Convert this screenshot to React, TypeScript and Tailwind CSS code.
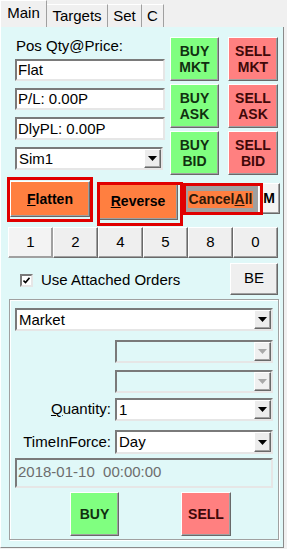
import React from "react";

// 凸起按钮边框
const raised =
  "border border-t-white border-l-white border-r-[#696969] border-b-[#696969] shadow-[inset_-1px_-1px_0_#a0a0a0]";
// 凹陷输入框边框
const sunken =
  "border-2 border-t-[#7a7a7a] border-l-[#7a7a7a] border-r-[#e6e6e6] border-b-[#e6e6e6]";

function Arrow({ disabled = false }: { disabled?: boolean }) {
  return (
    <div
      className={`w-[17px] h-full flex items-center justify-center ${raised} ${
        disabled ? "bg-[#f0f0f0]" : "bg-[#ececec]"
      }`}
    >
      <svg width="9" height="5" viewBox="0 0 9 5">
        <polygon points="0,0 9,0 4.5,5" fill={disabled ? "#a8a8a8" : "#000"} />
      </svg>
    </div>
  );
}

function Select({
  value,
  className,
  disabled = false,
}: {
  value?: string;
  className: string;
  disabled?: boolean;
}) {
  return (
    <div
      className={`${sunken} flex items-stretch ${
        disabled ? "bg-[#e0f8f8]" : "bg-white"
      } ${className}`}
    >
      <div className="flex-1 pl-[2px] leading-[19px] text-[15px] text-black">{value}</div>
      <Arrow disabled={disabled} />
    </div>
  );
}

function TradeBtn({ top, bottom, buy }: { top: string; bottom?: string; buy: boolean }) {
  return (
    <div
      className={`${raised} ${
        buy ? "bg-[#80ff80] text-[#103010]" : "bg-[#ff8080] text-[#400808]"
      } flex flex-col items-center justify-center font-bold text-[14px] leading-[16px]`}
    >
      <span>{top}</span>
      {bottom && <span>{bottom}</span>}
    </div>
  );
}

export default function App() {
  const nums = ["1", "2", "4", "5", "8", "0"];

  return (
    <div className="relative w-[287px] h-[549px] bg-[#f0f0f0] overflow-hidden font-['Liberation_Sans',Arial,sans-serif] text-black">
      {/* 标签页 */}
      <div className="flex items-end h-[27px]">
        <div className="w-[47px] h-[27px] border-t border-l border-r border-t-white border-l-white border-r-[#a0a0a0] bg-[#f0f0f0] flex items-center justify-center text-[15px] pb-[1px]">
          Main
        </div>
        <div className="w-[61px] h-[23px] border-t border-r border-t-white border-r-[#a0a0a0] flex items-center justify-center text-[15px]">
          Targets
        </div>
        <div className="w-[34px] h-[23px] border-t border-r border-t-white border-r-[#a0a0a0] flex items-center justify-center text-[15px]">
          Set
        </div>
        <div className="w-[22px] h-[23px] border-t border-r border-t-white border-r-[#a0a0a0] flex items-center justify-center text-[15px]">
          C
        </div>
      </div>

      {/* 主面板 */}
      <div className="w-[284px] h-[521px] bg-[#e0f8f8] border-r border-b border-r-[#8a8a8a] border-b-[#8a8a8a] border-l border-l-white">
        {/* 仓位与下单按钮 */}
        <div className="flex pt-[10px]">
          <div className="ml-[14px] w-[150px] flex flex-col">
            <div className="h-[18px] leading-[18px] text-[15px] pl-[1px]">Pos Qty@Price:</div>
            <div className={`${sunken} mt-[4px] h-[22px] bg-white text-[15px] leading-[18px] pl-[1px]`}>Flat</div>
            <div className={`${sunken} mt-[7px] h-[22px] bg-white text-[15px] leading-[18px] pl-[1px]`}>P/L: 0.00P</div>
            <div className={`${sunken} mt-[7px] h-[23px] bg-white text-[15px] leading-[19px] pl-[1px]`}>DlyPL: 0.00P</div>
            <Select value="Sim1" className="mt-[7px] h-[23px] w-[148px]" />
          </div>
          <div className="ml-[5px] grid grid-cols-[49px_50px] grid-rows-[44px_44px_44px] gap-x-[9px] gap-y-[3px]">
            <TradeBtn top="BUY" bottom="MKT" buy />
            <TradeBtn top="SELL" bottom="MKT" buy={false} />
            <TradeBtn top="BUY" bottom="ASK" buy />
            <TradeBtn top="SELL" bottom="ASK" buy={false} />
            <TradeBtn top="BUY" bottom="BID" buy />
            <TradeBtn top="SELL" bottom="BID" buy={false} />
          </div>
        </div>

        {/* Flatten / Reverse / CancelAll */}
        <div className="flex items-start mt-[6px] h-[46px]">
          <div className={`${raised} ml-[9px] w-[80px] h-[36px] bg-[#ff7f40] flex items-center justify-center font-bold text-[14px]`}>
            <span><span className="underline">F</span>latten</span>
          </div>
          <div className={`${raised} ml-[8px] mt-[2px] w-[80px] h-[37px] bg-[#ff7f40] flex items-center justify-center font-bold text-[14px]`}>
            <span><span className="underline">R</span>everse</span>
          </div>
          <div className="ml-[5px] mt-[3px] w-[75px] h-[30px] bg-[#a0a0a0] flex items-center justify-center font-bold text-[14px]">
            <span className="bg-[#ff7f40] leading-[17px] px-[1px] text-[#301808]">
              Cancel<span className="underline">A</span>ll
            </span>
          </div>
          <div className={`${raised} mt-[2px] w-[22px] h-[31px] bg-[#f4f4f4] flex items-center justify-center font-bold text-[14px]`}>
            M
          </div>
        </div>

        {/* 数量快捷键 */}
        <div className="flex ml-[7px]">
          {nums.map((n, i) => (
            <div
              key={n}
              className={`${raised} w-[45px] h-[31px] flex items-center justify-center text-[15px] ${
                i === 0 ? "bg-[#f3f3f3] border-r-[#a0a0a0] border-b-[#a0a0a0]" : "bg-[#efefef]"
              }`}
            >
              {n}
            </div>
          ))}
        </div>

        {/* Use Attached Orders */}
        <div className="flex items-center h-[37px] mt-[4px]">
          <div className={`${sunken} ml-[19px] w-[13px] h-[13px] bg-white flex items-center justify-center`}>
            <svg width="7" height="7" viewBox="0 0 7 7">
              <polyline points="0.5,3.5 2.5,5.5 6.5,0.8" fill="none" stroke="#000" strokeWidth="1.6" />
            </svg>
          </div>
          <span className="ml-[8px] text-[15px]">Use Attached Orders</span>
          <div className={`${raised} ml-auto mr-[5px] w-[48px] h-[32px] mb-[4px] bg-[#efefef] flex items-center justify-center text-[15px]`}>
            BE
          </div>
        </div>

        {/* 下单区 */}
        <div className="ml-[8px] w-[270px] h-[241px] border border-[#a0a0a0] shadow-[inset_1px_1px_0_white,1px_1px_0_white] flex flex-col">
          <Select value="Market" className="mt-[8px] ml-[5px] w-[258px] h-[23px]" />
          <Select disabled className="mt-[9px] ml-[105px] w-[158px] h-[23px]" />
          <Select disabled className="mt-[7px] ml-[105px] w-[158px] h-[23px]" />
          <div className="flex items-center mt-[5px]">
            <div className="w-[102px] text-right text-[15px] pr-[1px]">
              <span className="underline">Q</span>uantity:
            </div>
            <Select value="1" className="ml-[3px] w-[158px] h-[23px]" />
          </div>
          <div className="flex items-center mt-[9px]">
            <div className="w-[102px] text-right text-[15px] pr-[1px]">TimeInForce:</div>
            <Select value="Day" className="ml-[3px] w-[158px] h-[24px]" />
          </div>
          <div className={`${sunken} mt-[4px] ml-[5px] w-[258px] h-[30px] bg-[#e0f8f8] text-[15px] leading-[24px] pl-[1px] text-[#6d6d6d]`}>
            2018-01-10&nbsp;&nbsp;00:00:00
          </div>
          <div className="flex mt-[4px]">
            <div className={`${raised} ml-[60px] w-[49px] h-[44px] bg-[#80ff80] flex items-center justify-center font-bold text-[14px] text-[#103010]`}>
              BUY
            </div>
            <div className={`${raised} ml-[62px] w-[50px] h-[44px] bg-[#ff8080] flex items-center justify-center font-bold text-[14px] text-[#400808]`}>
              SELL
            </div>
          </div>
        </div>
      </div>

      {/* 红色标注框 */}
      <div className="absolute left-[7px] top-[177px] w-[86px] h-[45px] border-[3px] border-[#e00000]" />
      <div className="absolute left-[97px] top-[182px] w-[86px] h-[44px] border-[3px] border-[#e00000]" />
      <div className="absolute left-[183px] top-[183px] w-[80px] h-[32px] border-[3px] border-[#e00000]" />
    </div>
  );
}
